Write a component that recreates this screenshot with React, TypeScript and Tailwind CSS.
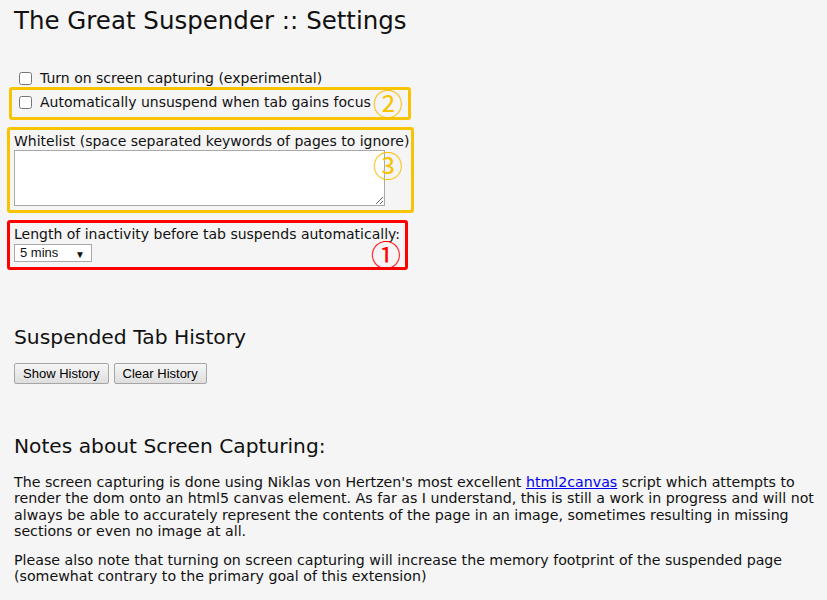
import React from 'react';

const verdana = { fontFamily: '"DejaVu Sans", Verdana, sans-serif' };
const arial = { fontFamily: '"Liberation Sans", Arial, sans-serif' };

// annotation glyphs drawn over the settings form
const Circled: React.FC<{ glyph: string; color: string; className: string }> = ({ glyph, color, className }) => (
    <span
        className={`absolute text-[30px] leading-none pointer-events-none ${color} ${className}`}
        style={{ fontFamily: '"Noto Sans CJK JP", serif' }}
    >
        {glyph}
    </span>
);

const CheckRow: React.FC<{ label: string }> = ({ label }) => (
    <label className="flex items-center h-[24px] text-[14px] text-[#111]">
        <input type="checkbox" className="ml-[5px] mr-[8px] w-[13px] h-[13px] accent-gray-400" />
        {label}
    </label>
);

const GreyButton: React.FC<{ label: string }> = ({ label }) => (
    <button
        type="button"
        className="h-[21px] px-[8px] text-[13px] text-black border border-[#a6a6a6] rounded-[2px] bg-gradient-to-b from-[#f6f6f6] to-[#dedede]"
        style={arial}
    >
        {label}
    </button>
);

const App: React.FC = () => {
    return (
        <div className="min-h-[600px] bg-[#f5f5f5] pl-[14px] pt-[6px] pb-4 text-[#111]" style={verdana}>
            <h1 className="text-[24.5px] leading-[30px] font-normal">The Great Suspender :: Settings</h1>

            <div className="mt-[30px]">
                <CheckRow label="Turn on screen capturing (experimental)" />
                <div className="relative">
                    <CheckRow label="Automatically unsuspend when tab gains focus" />
                    <div className="absolute -left-[5px] -top-[3px] w-[402px] h-[33px] border-[3px] border-[#f8c300] rounded-[3px] pointer-events-none" />
                    <Circled glyph="②" color="text-[#f8c300]" className="left-[359px] -top-[3px]" />
                </div>
            </div>

            <div className="relative mt-[19px]">
                <div className="text-[14px] leading-[16px]">Whitelist (space separated keywords of pages to ignore)</div>
                <textarea className="block mt-[1px] w-[371px] h-[56px] bg-white border border-[#a9a9a9] resize" />
                <div className="absolute -left-[7px] -top-[6px] w-[407px] h-[86px] border-[3px] border-[#f8c300] rounded-[3px] pointer-events-none" />
                <Circled glyph="③" color="text-[#f8c300]" className="left-[359px] top-[16px]" />
            </div>

            <div className="relative mt-[20px]">
                <div className="text-[14px] leading-[16px]">Length of inactivity before tab suspends automatically:</div>
                <div className="relative w-[78px] h-[18px] mt-[2px] bg-white border border-[#a9a9a9] flex items-center pl-[5px] text-[13px]" style={arial}>
                    5 mins
                    <span className="absolute right-[6px] top-[2px] text-[10px]">▼</span>
                </div>
                <div className="absolute -left-[7px] -top-[6px] w-[401px] h-[50px] border-[3px] border-[#ff0000] rounded-[3px] pointer-events-none" />
                <Circled glyph="①" color="text-[#ff0000]" className="left-[357px] top-[12px]" />
            </div>

            <h2 className="mt-[63px] text-[20.3px] leading-[24px] font-normal">Suspended Tab History</h2>
            <div className="flex gap-[5px] mt-[14px]">
                <GreyButton label="Show History" />
                <GreyButton label="Clear History" />
            </div>

            <h2 className="mt-[50px] text-[20.2px] leading-[24px] font-normal">Notes about Screen Capturing:</h2>
            <p className="mt-[16px] w-[810px] text-[14.2px] leading-[16.3px]">
                The screen capturing is done using Niklas von Hertzen's most excellent{' '}
                <a href="#" className="text-[#0000ee] underline">html2canvas</a> script which attempts to render the dom onto an html5 canvas element. As far as I understand, this is still a work in progress and will not always be able to accurately represent the contents of the page in an image, sometimes resulting in missing sections or even no image at all.
            </p>
            <p className="mt-[13px] w-[810px] text-[14.2px] leading-[16.3px]">
                Please also note that turning on screen capturing will increase the memory footprint of the suspended page (somewhat contrary to the primary goal of this extension)
            </p>
        </div>
    );
};

export default App;
